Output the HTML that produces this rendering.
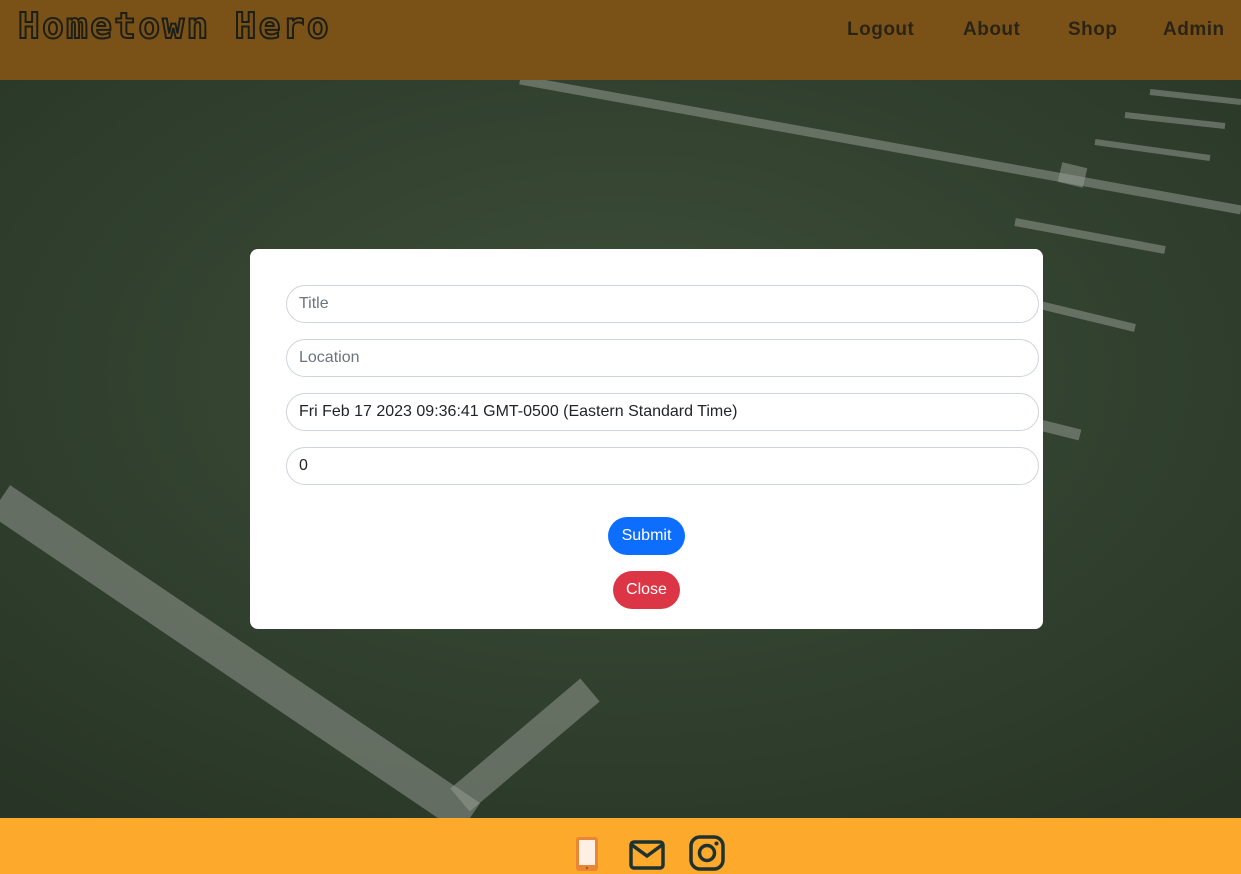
<!DOCTYPE html>
<html><head><meta charset="utf-8"><style>
*{box-sizing:border-box;margin:0;padding:0}
html,body{width:1241px;height:874px;overflow:hidden}
body{font-family:"Liberation Sans",sans-serif;position:relative;background:#2c3a2a}
header{position:absolute;left:0;top:0;width:1241px;height:80px;background:#7a5218}
.logo{position:absolute;left:18px;top:6px;font-family:"DejaVu Sans Mono","Liberation Mono",monospace;font-weight:bold;font-size:36px;color:transparent;-webkit-text-stroke:2px #1c1f17;letter-spacing:2.4px;white-space:nowrap}
nav a{position:absolute;top:19px;font-size:19px;font-weight:bold;color:#2b2416;text-decoration:none;letter-spacing:.5px}
.bg{position:absolute;left:0;top:80px;width:1241px;height:738px}
.card{position:absolute;left:250px;top:249px;width:793px;height:380px;background:#fff;border-radius:8px}
.inp{position:absolute;left:36px;width:753px;height:38px;border:1px solid #ced4da;border-radius:19px;font-size:16px;padding:9px 12px;color:#212529}
.ph{color:#6c757d}
.btn{position:absolute;height:38px;border-radius:19px;color:#fff;font-size:16px;line-height:38px;text-align:center}
footer{position:absolute;left:0;top:818px;width:1241px;height:56px;background:#fda92c;overflow:hidden}
footer svg{position:absolute}
</style></head><body>
<header><div class="logo">Hometown Hero</div>
<nav><a style="left:847px">Logout</a><a style="left:963px">About</a><a style="left:1068px">Shop</a><a style="left:1163px">Admin</a></nav></header>
<svg class="bg" viewBox="0 0 1241 738" preserveAspectRatio="none">
<defs><radialGradient id="g" cx="50%" cy="40%" r="75%"><stop offset="0" stop-color="#3d4f39"/><stop offset="1" stop-color="#283526"/></radialGradient></defs>
<rect width="1241" height="738" fill="url(#g)"/>
<g stroke="#9a9f98" stroke-opacity=".5" fill="none">
<path d="M520 0 L1241 130" stroke-width="9"/>
<path d="M1150 12 L1241 22" stroke-width="6"/>
<path d="M1125 35 L1225 46" stroke-width="6"/>
<path d="M1095 62 L1210 78" stroke-width="6"/>
<path d="M1060 92 L1085 98" stroke-width="20"/>
<path d="M1015 142 L1165 170" stroke-width="8"/>
<path d="M1040 225 L1135 248" stroke-width="8"/>
<path d="M1040 345 L1080 355" stroke-width="11"/>
<path d="M0 420 L470 738" stroke-width="36"/>
<path d="M460 720 L590 610" stroke-width="30"/>
</g></svg>
<div class="card">
<div class="inp ph" style="top:36px">Title</div>
<div class="inp ph" style="top:90px">Location</div>
<div class="inp" style="top:144px">Fri Feb 17 2023 09:36:41 GMT-0500 (Eastern Standard Time)</div>
<div class="inp" style="top:198px">0</div>
<div class="btn" style="left:358px;top:268px;width:77px;background:#0d6efd">Submit</div>
<div class="btn" style="left:363px;top:322px;width:67px;background:#dc3545">Close</div>
</div>
<footer>
<svg style="left:575px;top:18px" width="24" height="36" viewBox="0 0 24 36"><rect x="1" y="1" width="22" height="34" rx="3" fill="#e98636"/><rect x="4" y="4" width="16" height="25" fill="#fdf0e2"/><circle cx="12" cy="32" r="1.2" fill="#a4552a"/></svg>
<svg style="left:629px;top:22px" width="36" height="30" viewBox="0 0 36 30"><rect x="2" y="2" width="32" height="26" rx="3" fill="none" stroke="#1e3330" stroke-width="3.5"/><path d="M3 5 L18 16 L33 5" fill="none" stroke="#1e3330" stroke-width="3.5"/></svg>
<svg style="left:689px;top:17px" width="36" height="36" viewBox="0 0 36 36"><rect x="2" y="2" width="32" height="32" rx="9" fill="none" stroke="#1e3330" stroke-width="3.5"/><circle cx="18" cy="18" r="7.5" fill="none" stroke="#1e3330" stroke-width="3.5"/><circle cx="27.5" cy="8.5" r="2" fill="#1e3330"/></svg>
</footer>
</body></html>
